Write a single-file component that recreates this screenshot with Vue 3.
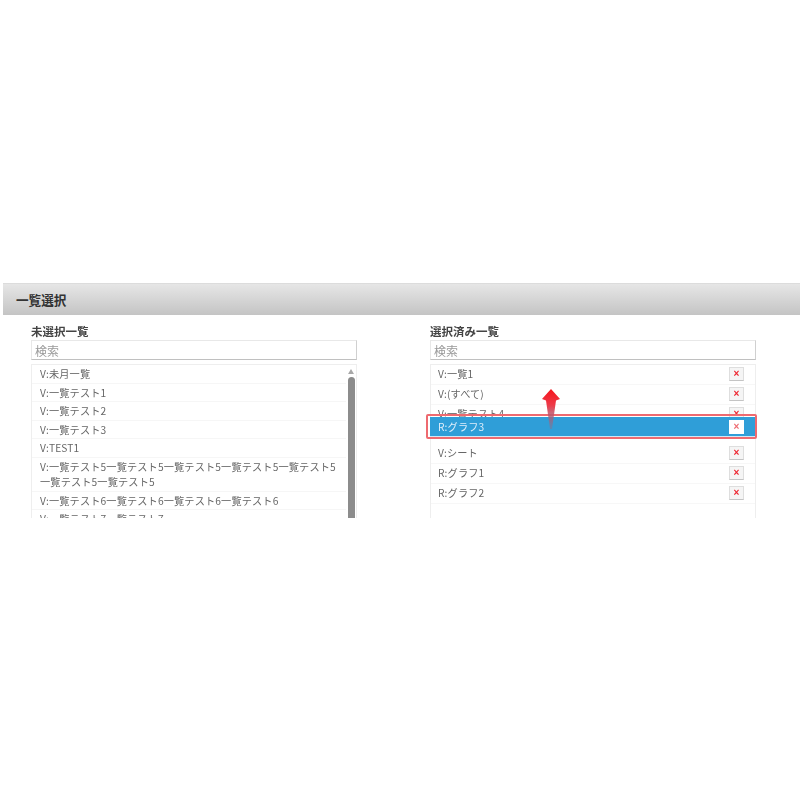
<script setup>
const unselected = [
  { text: 'V:未月一覧' },
  { text: 'V:一覧テスト1' },
  { text: 'V:一覧テスト2' },
  { text: 'V:一覧テスト3' },
  { text: 'V:TEST1' },
  { text: 'V:一覧テスト5一覧テスト5一覧テスト5一覧テスト5一覧テスト5 一覧テスト5一覧テスト5' },
  { text: 'V:一覧テスト6一覧テスト6一覧テスト6一覧テスト6' },
  { text: 'V:一覧テスト7一覧テスト7' }
]

const selected = [
  { text: 'V:一覧1' },
  { text: 'V:(すべて)' },
  { text: 'V:一覧テスト4' },
  { placeholder: true },
  { text: 'V:シート' },
  { text: 'R:グラフ1' },
  { text: 'R:グラフ2' }
]
</script>

<template>
  <div class="page">
    <section class="panel">
      <h2 class="panel-head">一覧選択</h2>
      <div class="columns">
        <div class="col">
          <div class="col-label">未選択一覧</div>
          <input class="search" type="text" placeholder="検索" />
          <div class="list">
            <div class="rows">
              <div v-for="item in unselected" :key="item.text" class="row left-row">{{ item.text }}</div>
            </div>
            <div class="scrollbar">
              <span class="scroll-up"></span>
              <span class="scroll-thumb"></span>
            </div>
          </div>
        </div>

        <div class="col">
          <div class="col-label">選択済み一覧</div>
          <input class="search" type="text" placeholder="検索" />
          <div class="list right-list">
            <template v-for="(item, i) in selected" :key="i">
              <div v-if="item.placeholder" class="row right-row gap"></div>
              <div v-else class="row right-row">
                <span>{{ item.text }}</span>
                <button class="del" type="button">×</button>
              </div>
            </template>

            <!-- ドラッグ中の行 -->
            <div class="drag-frame">
              <div class="drag-row">
                <span>R:グラフ3</span>
                <button class="del on-blue" type="button">×</button>
              </div>
            </div>
            <svg class="arrow" width="20" height="42" viewBox="0 0 20 42">
              <defs>
                <linearGradient id="arrowFill" x1="0" y1="0" x2="0" y2="1">
                  <stop offset="0" stop-color="#f5141c" />
                  <stop offset="0.4" stop-color="#ee3a48" />
                  <stop offset="1" stop-color="#6f7da0" stop-opacity="0.6" />
                </linearGradient>
              </defs>
              <path d="M10 1 L19 11 L15 12.5 L11 41 L9 41 L5 12.5 L1 11 Z" fill="url(#arrowFill)" />
            </svg>
          </div>
        </div>
      </div>
    </section>
  </div>
</template>

<style scoped>
.page {
  width: 800px;
  height: 800px;
  padding-top: 283px;
  box-sizing: border-box;
  background: #fff;
  color: #555;
  font-family: "Noto Sans CJK JP", "Liberation Sans", sans-serif;
  overflow: hidden;
}
.panel {
  margin-left: 3px;
  height: 235px;
  overflow: hidden;
  filter: blur(0.6px);
}
.panel-head {
  margin: 0;
  height: 32px;
  padding-left: 13px;
  line-height: 31px;
  font-size: 12.6px;
  font-weight: 700;
  color: #333;
  background: linear-gradient(180deg, #e6e6e6, #c4c4c4);
  border-top: 1px solid #dcdcdc;
  box-sizing: border-box;
}
.columns {
  display: grid;
  grid-template-columns: 326px 326px;
  column-gap: 73px;
  padding: 9px 0 0 28px;
}
.col-label {
  height: 16px;
  line-height: 14px;
  font-size: 11.5px;
  font-weight: 700;
  color: #444;
}
.search {
  display: block;
  width: 100%;
  height: 20px;
  box-sizing: border-box;
  padding: 0 3px;
  border: 1px solid #e8e8e8;
  border-bottom-color: #c0c0c0;
  border-right-color: #d0d0d0;
  outline: none;
  font-family: inherit;
  font-size: 12px;
  background: #fff;
}
.search::placeholder {
  color: #999;
}
.list {
  position: relative;
  display: flex;
  margin-top: 4px;
  height: 300px;
  border: 1px solid #eee;
  box-sizing: border-box;
}
.rows {
  flex: 1;
  min-width: 0;
}
.row {
  font-size: 10.2px;
  letter-spacing: 0.13px;
  color: #666;
}
.left-row {
  line-height: 15.5px;
  padding: 1px 8px;
  border-bottom: 1px solid #f6f6f6;
}
.scrollbar {
  width: 10px;
  display: flex;
  flex-direction: column;
  align-items: center;
  flex-shrink: 0;
}
.scroll-up {
  margin-top: 4px;
  width: 0;
  height: 0;
  border-left: 3px solid transparent;
  border-right: 3px solid transparent;
  border-bottom: 5px solid #a8a8a8;
}
.scroll-thumb {
  margin-top: 3px;
  width: 7px;
  flex: 1;
  border-radius: 4px 4px 0 0;
  background: #8c8c8c;
}
.right-list {
  display: block;
}
.right-row {
  height: 20px;
  display: flex;
  align-items: center;
  justify-content: space-between;
  padding: 0 11px 2px 7px;
  box-sizing: border-box;
  border-bottom: 1px solid #f7f7f7;
}
.gap {
  height: 19px;
  border-bottom: 0;
}
.del {
  width: 15px;
  height: 14px;
  padding: 0;
  display: grid;
  place-items: center;
  font-family: "Liberation Sans", sans-serif;
  font-size: 10px;
  line-height: 1;
  font-weight: 700;
  color: #ee2530;
  background: #f5f5f5;
  border: 1px solid #dedede;
  border-bottom-color: #c4c4c4;
}
.drag-frame {
  position: absolute;
  left: -5px;
  top: 49px;
  width: 331px;
  height: 25px;
  box-sizing: border-box;
  padding: 1px 0 1.5px 2px;
  border: 2px solid #ee6a70;
  border-radius: 2px;
}
.drag-row {
  height: 19px;
  display: flex;
  align-items: center;
  justify-content: space-between;
  padding: 0 11px 0 8px;
  font-size: 10.2px;
  letter-spacing: 0.13px;
  color: #dfeefa;
  background: #2f9ed8;
  box-shadow: 0 1px 0 #cfe8f6;
}
.del.on-blue {
  border-color: #fff;
  background: #fff;
  color: #ee6a70;
}
.arrow {
  position: absolute;
  left: 110px;
  top: 23px;
}
</style>

<style>
html, body {
  margin: 0;
  background: #fff;
}
</style>
